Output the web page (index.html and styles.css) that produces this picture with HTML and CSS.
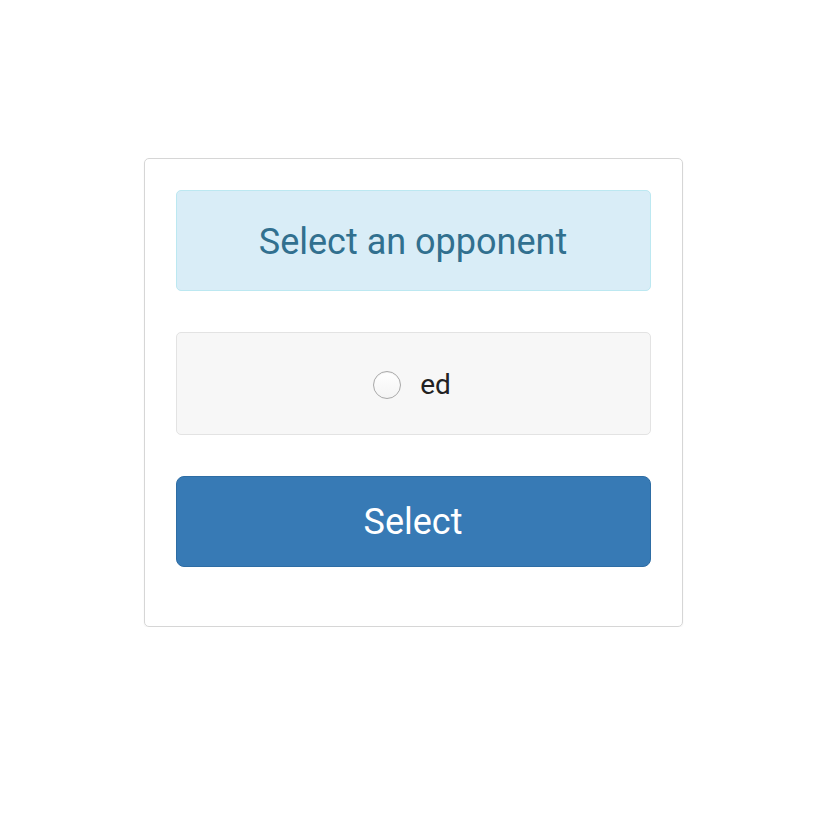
FILE: index.html
```html
<!DOCTYPE html>
<html>
<head>
<meta charset="utf-8">
<link rel="stylesheet" href="styles.css">
</head>
<body>
<div class="card">
  <div class="alert">Select an opponent</div>
  <div class="well">
    <label class="option"><span class="radio"></span><span class="name">ed</span></label>
  </div>
  <button class="btn">Select</button>
</div>
</body>
</html>
```
FILE: styles.css
```css
html, body { margin: 0; padding: 0; background: #fff; }
body { font-family: Roboto, "Liberation Sans", sans-serif; }
.card {
  box-sizing: border-box;
  width: 539px;
  margin: 158px auto 0;
  border: 1px solid #d6d6d6;
  border-radius: 5px;
  padding: 31px 31px 59px;
  display: flex;
  flex-direction: column;
  gap: 41px;
  box-shadow: 0 1px 2px rgba(0,0,0,0.06);
}
.alert {
  box-sizing: border-box;
  height: 101px;
  padding-top: 2px;
  background: #d9edf7;
  border: 1px solid #bce8f1;
  border-radius: 5px;
  color: #31708f;
  font-size: 36px;
  display: flex;
  align-items: center;
  justify-content: center;
}
.well {
  box-sizing: border-box;
  height: 103px;
  padding-top: 2px;
  background: #f7f7f7;
  border: 1px solid #e3e3e3;
  border-radius: 5px;
  display: flex;
  align-items: center;
  justify-content: center;
}
.option { display: flex; align-items: center; gap: 19px; margin-right: 2px; }
.radio {
  box-sizing: border-box;
  width: 28px; height: 28px;
  border-radius: 50%;
  border: 1px solid #a9a9a9;
  background: linear-gradient(#fff, #f4f4f4);
  box-shadow: inset 0 1px 1px rgba(0,0,0,0.05);
}
.name { font-size: 28px; color: #222; }
.btn {
  box-sizing: border-box;
  height: 91px;
  background: #377ab5;
  border: 1px solid #2e6da4;
  border-radius: 8px;
  color: #fff;
  font-family: Roboto, "Liberation Sans", sans-serif;
  font-size: 36px;
  padding: 0;
}
```
